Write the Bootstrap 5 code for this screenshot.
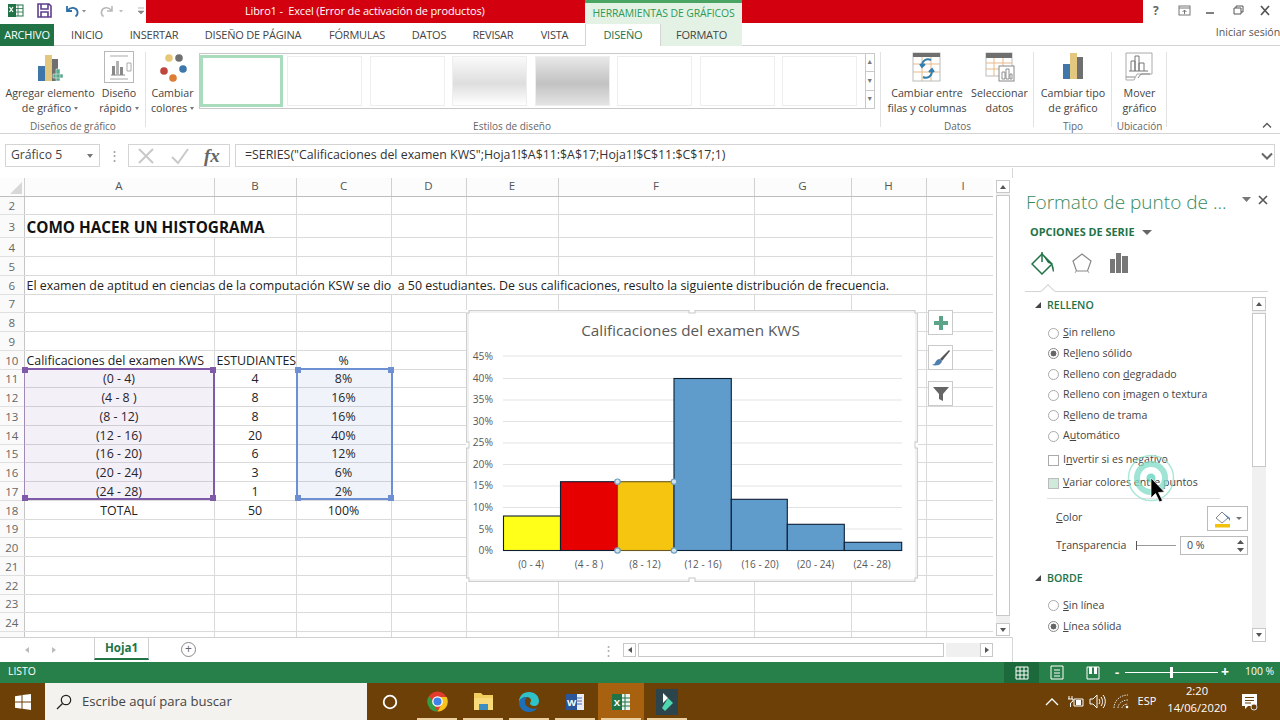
<!DOCTYPE html>
<html lang="es">
<head>
<meta charset="UTF-8">
<title>Libro1 - Excel</title>
<link href="https://cdn.jsdelivr.net/npm/bootstrap@5.3.0/dist/css/bootstrap.min.css" rel="stylesheet">
<style>
html,body{margin:0;height:720px;overflow:hidden;background:#fff}
body{font-family:"Open Sans","Liberation Sans",sans-serif;font-size:11.5px;color:#444}
.xl-app{width:1280px;height:720px;overflow:hidden}
.xl-title{height:24px;flex:none}
.xl-qat{width:146px}
.xl-red{background:#d3000f;color:#fff;height:23px}
.xl-red1{width:439px;font-size:11px;letter-spacing:-.15px}
.xl-red2{width:401px}
.xl-tool{width:157px;background:#e3f2e5;border-top:3px solid #4aa564;color:#2f9a55;font-size:10.4px;letter-spacing:-.1px}
.xl-win{width:137px;color:#555}
.xl-tabs{height:22px;flex:none;border-bottom:1px solid #d4d4d4;font-size:11px;letter-spacing:-.2px;color:#444}
.xl-tab{height:22px;display:flex;align-items:center;justify-content:center;padding-top:1px}
.xl-tab-file{background:#217346;color:#fff;width:54px}
.xl-tab-on{background:#fff;color:#217346;border:1px solid #d4d4d4;border-top:0;border-bottom:0;height:22px;width:76px}
.xl-tab-ctx{background:#e3f2e5;width:81px}
.xl-login{margin-left:auto;padding:0 0 4px;width:64px;font-size:10.6px;letter-spacing:0;white-space:nowrap;color:#555}
.xl-ribbon{height:88px;flex:none;border-bottom:1px solid #d4d4d4;background:#fff}
.xl-grp{height:87px;flex:none;position:relative}
.xl-grp::after{content:"";position:absolute;right:0;top:6px;bottom:6px;border-right:1px solid #e2e2e2}
.xl-grp-name{height:15px;line-height:17px;font-size:10px;color:#666;text-align:center;flex:none}
.xl-tools{flex:1;min-height:0}
.xl-btn{display:flex;flex-direction:column;align-items:center;text-align:center;line-height:15px;font-size:10.7px;color:#444;flex:none;white-space:nowrap}
.xl-btn svg{display:block;height:34px;margin:5px 0 1px}
.xl-caret{display:inline-block;border:2.5px solid transparent;border-top:3px solid #777;border-bottom:0;vertical-align:2px;margin-left:3px}
.xl-gallery{margin-top:7px;height:56px;width:676px;border:1px solid #c9c9c9;gap:7.5px;padding:2px 0;flex:none}
.xl-swatch{width:75px;height:50px;border:1px solid #eee;background:#fff;flex:none}
.xl-swatch-on{width:83px;height:52px;margin-top:-1px;border:3px solid #a9dcbd;margin-right:-3.5px}
.xl-swatch-g1{background:linear-gradient(#fafafa,#dedede 55%,#fff)}
.xl-swatch-g2{background:linear-gradient(#e8e8e8,#c2c2c2 55%,#e4e4e4)}
.xl-gal-bar{width:15px;margin-left:auto;border-left:1px solid #c9c9c9;font-size:7px;color:#777;margin-top:-2px;margin-bottom:-2px}
.xl-gal-bar span{flex:1;display:flex;align-items:center;justify-content:center;border-bottom:1px solid #c9c9c9}
.xl-gal-bar span:last-child{border-bottom:0}
.xl-fbar{height:34px;flex:none;padding:10px 5px 0 5px}
.xl-name{width:95px;height:23px;border:1px solid #d4d4d4;padding:0 5px;font-size:12.2px;color:#444}
.xl-dots{width:28px;color:#999;font-size:13px;text-align:center}
.xl-fbtns{width:102px;height:23px;border:1px solid #d4d4d4;gap:14px;padding:0 7px}
.xl-formula{width:1040px;margin-left:5px;height:23px;border:1px solid #d4d4d4;padding:0 9px;font-size:12.35px;color:#333;white-space:nowrap}
.xl-main{height:494px;flex:none}
.xl-left{width:1013px;flex:none;padding-top:10px;border-right:1px solid #d8d8d8}
.xl-gridwrap{height:459px;flex:none}
.xl-grid{width:993px;height:459px;overflow:hidden;position:relative;flex:none}
.xl-sheet{table-layout:fixed;width:1000px;border-collapse:collapse;margin:0;font-size:12.4px;color:#222}
.xl-sheet>:not(caption)>*>*{padding:2px 2px 0;border:1px solid #dadada;height:18.75px;line-height:14px;white-space:nowrap;box-shadow:none;vertical-align:middle;font-weight:400;background:#fff;color:#222}
.xl-sheet>thead>tr>th{height:18px;padding:0 0 1px;text-align:center;color:#555;background:#fcfcfc;border-color:#d0d0d0;border-top:0;border-bottom:1.5px solid #bdbdbd;font-size:11.5px}
.xl-sheet>tbody>tr>th{text-align:center;color:#666;background:#fafafa;border-color:#e0e0e0;border-left:0;border-right:1.5px solid #c6c6c6;font-size:11.5px;padding:2px 0 0}
.xl-sheet>thead>tr>th:first-child{border-left:0}
.xl-sheet>tbody>tr>.xl-big{font-size:15.3px;font-weight:700;height:23px;color:#111;padding:1px 0 0 2px}
.xl-sheet .xl-ctr{text-align:center}
.xl-range{position:absolute;pointer-events:none}
.xl-range i{position:absolute;width:6px;height:6px}
.xl-rg-a{left:24px;top:190px;width:191px;height:132px;background:rgba(112,70,170,.08);border:2px solid #7f5aa8;border-left:1px solid rgba(127,90,168,.5)}
.xl-rg-a i{background:#7f5aa8}
.xl-rg-c{left:295.5px;top:190px;width:97px;height:132px;background:rgba(60,100,190,.08);border:2px solid #6c90d2}
.xl-rg-c i{background:#6c90d2}
.xl-tl{left:-3px;top:-3px}.xl-tr{right:-3px;top:-3px}.xl-bl{left:-3px;bottom:-3px}.xl-br{right:-3px;bottom:-3px}
.xl-chart{position:absolute;left:466px;top:132px;width:452px;height:272px}
.xl-chart svg{display:block}
.xl-chart text{font-family:"Open Sans","Liberation Sans",sans-serif}
.xl-fab{position:absolute;left:928px;width:25px;height:25px;background:#fff;border:1px solid #cacaca;display:flex;align-items:center;justify-content:center}
.xl-vs{width:20px;flex:none;padding:2px 3px 0;background:#fff}
.xl-sb-btn{height:13px;border:1px solid #c8c8c8;background:#fff;display:flex;align-items:center;justify-content:center;flex:none}
.xl-sb-tri{border:3px solid transparent}
.xl-up{border-bottom:4px solid #555;border-top:0}
.xl-dn{border-top:4px solid #555;border-bottom:0}
.xl-lf{border-right:4px solid #555;border-left:0}
.xl-rt{border-left:4px solid #555;border-right:0}
.xl-sb-track{background:#f0f0f0;flex:1}
.xl-sb-thumb{background:#fff;border:1px solid #c8c8c8}
.xl-sheettabs{height:25px;flex:none;border-top:1px solid #d0d0d0;color:#aaa;position:relative}
.xl-sheet-tab{margin-left:94px;width:55px;height:22px;border:1px solid #d0d0d0;border-top:0;border-bottom:2px solid #217346;color:#217346;font-weight:700;font-size:11.6px;background:#fff}
.xl-nav-tri{position:absolute;top:9px}
.xl-addsheet{position:absolute;left:181px;top:4px;width:15px;height:15px;border:1px solid #888;border-radius:50%;color:#666;font-size:12px;line-height:12px;text-align:center}
.xl-hs{position:absolute;left:623px;top:5px;width:370px;height:14px}
.xl-hs .xl-sb-btn{width:13px;height:14px}
.xl-hs .xl-sb-thumb{width:306px;margin:0 2px}
.xl-pane{width:267px;flex:none;position:relative;background:#fff}
.xl-pane-title{padding:22px 0 0 13px;font-size:19px;line-height:24px;color:#378a5c;font-weight:300;white-space:nowrap}
.xl-pane-sub{padding:10px 0 0 17px;font-size:10.9px;line-height:16px;font-weight:700;color:#217346;height:26px}
.xl-pane-icons{padding:0 0 0 18px;gap:16px;height:46px}
.xl-pane-rule{margin:5px 12px 0 12px;height:0;border-top:1px solid #d4d4d4;position:relative;width:243px}
.xl-notch{position:absolute;left:18px;top:-6px;width:10px;height:10px;transform:rotate(45deg);background:#fff;border-left:1px solid #d4d4d4;border-top:1px solid #d4d4d4}
.xl-pane-body{height:345px;margin-top:5px}
.xl-pane-list{width:239px;overflow:hidden;flex:none;font-size:10.6px;color:#444}
.xl-pane-sb{width:14px;flex:none}
.xl-pane-sb .xl-sb-btn{height:14px}
.xl-sec{height:17px;line-height:17px;padding-left:22px;font-weight:600;color:#217346;font-size:10.6px}
.xl-sec-tri{display:inline-block;width:0;height:0;border-left:6px solid transparent;border-bottom:6px solid #444;margin-right:6px;vertical-align:1px}
.xl-opt{height:20.6px;display:flex;align-items:center;padding-left:35px;gap:4px;white-space:nowrap}
.xl-opt .form-check-input{width:11px;height:11px;margin:0;border:1px solid #aaa;flex:none;background-color:#fff;box-shadow:none}
.xl-opt .form-check-input:checked{background-color:#fff;border-color:#888;background-image:radial-gradient(circle,#666 0,#666 2.7px,transparent 3.2px)}
.xl-opt .form-check-input[type=checkbox]{border-radius:0}
.xl-opt .form-check-input.xl-tint{background:#cfe9da;border-color:#bbb}
.xl-sep{margin:3px 0 0 34px;border-top:1px solid #e0e0e0;width:173px}
.xl-fmt{padding-left:43px;white-space:nowrap}
.xl-fillbtn{margin-left:auto;width:41px;height:25px;border:1px solid #bbb;margin-right:4px;gap:4px}
.xl-spin{width:68px;height:19px;border:1px solid #bbb;margin-left:auto;margin-right:4px;padding:0 3px 0 6px;font-size:10.6px;color:#444}
.xl-slider{width:40px;height:9px;border-left:1px solid #555;margin-left:10px;position:relative}
.xl-slider::after{content:"";position:absolute;left:0;right:0;top:4px;border-top:1px solid #999}
.xl-click{position:absolute;left:1125px;top:452px;pointer-events:none}
.xl-status{height:21px;flex:none;background:#27804a;color:#fff;font-size:10.4px;padding:0 0 2px 8px;position:relative}
.xl-sv{position:absolute;top:0;height:21px;display:flex;align-items:center;justify-content:center}
.xl-sv-on{background:#1c6a3c;left:1004px;width:35px}
.xl-zoomline{position:absolute;left:1125px;top:10px;width:93px;border-top:1px solid #fff}
.xl-zoomthumb{position:absolute;left:1170px;top:5px;width:3px;height:11px;background:#fff}
.xl-task{height:37px;flex:none;background:#6d4007;color:#fff;position:relative}
.xl-search{position:absolute;left:45px;top:0;width:322px;height:37px;background:#f3f2ee;color:#444;font-size:13.1px;gap:10px;padding-left:11px}
.xl-ti{position:absolute;top:0;height:37px;width:46px;display:flex;align-items:center;justify-content:center}
.xl-ti-open::after{content:"";position:absolute;left:3px;right:3px;bottom:0;height:2px;background:#ecd0a0}
.xl-ti-act{background:#a8620f}
.xl-tray{position:absolute;top:0;height:37px;display:flex;align-items:center;justify-content:center;font-size:11px}
.xl-clock{left:1172px;width:50px;flex-direction:column;line-height:17px;font-size:11.2px;text-align:center;padding-bottom:5px}
</style>
</head>
<body>
<div class="xl-app d-flex flex-column">

  <!-- barra de titulo -->
  <div class="xl-title d-flex">
    <div class="xl-qat position-relative">
      <svg width="146" height="24" viewBox="0 0 146 24">
        <rect x="8" y="4" width="8" height="13" fill="#217346"/><rect x="15" y="5" width="8" height="11" fill="none" stroke="#217346"/><path d="M18 5v11M15 8.500h8M15 12h8" stroke="#217346" stroke-width=".8"/>
        <path d="M9.500 7l3.500 5M13 7l-3.500 5" stroke="#fff" stroke-width="1.300"/>
        <path d="M38 4h11l2 2v11H38zM41 4v5h7V4M41 17v-5h7v5" fill="none" stroke="#5d3f8e" stroke-width="1.600"/>
        <path d="M67 6v5h5M67.500 10.500c3-4 9-3.500 10 1 .4 2-.5 4-2 5" fill="none" stroke="#2f6fa8" stroke-width="1.800"/>
        <path d="M82 10h4l-2 2.500z" fill="#888"/>
        <path d="M112 6v5h-5M111.500 10.500c-3-4-9-3.500-10 1-.4 2 .5 4 2 5" fill="none" stroke="#b9b9b9" stroke-width="1.600"/>
        <path d="M119 10h4l-2 2.500z" fill="#bbb"/>
        <path d="M138 8h6M138 11h6l-3 3z" fill="#888" stroke="#888" stroke-width=".6"/>
      </svg>
    </div>
    <div class="xl-red xl-red1 d-flex align-items-center"><span style="margin-left:99px">Libro1 -&nbsp; Excel (Error de activación de productos)</span></div>
    <div class="xl-tool d-flex align-items-center justify-content-center">HERRAMIENTAS DE GRÁFICOS</div>
    <div class="xl-red xl-red2"></div>
    <div class="xl-win">
      <svg width="137" height="24" viewBox="0 0 137 24">
        <text x="10" y="15" font-size="12" font-weight="700" fill="#666" font-family="Open Sans, sans-serif">?</text>
        <rect x="36" y="6" width="11" height="9" fill="none" stroke="#777"/><path d="M36 8h11M41.500 14v-4M39.500 12l2-2 2 2" stroke="#777" fill="none"/>
        <path d="M63 13h8" stroke="#555" stroke-width="1.500"/>
        <path d="M91 8h7v6h-7zM93 8V6h7v6h-2" fill="none" stroke="#555"/>
        <path d="M118 6l8 9M126 6l-8 9" stroke="#555" stroke-width="1.700"/>
      </svg>
    </div>
  </div>

  <!-- pestañas -->
  <div class="xl-tabs d-flex">
    <div class="xl-tab xl-tab-file">ARCHIVO</div>
    <div class="xl-tab" style="width:66px">INICIO</div>
    <div class="xl-tab" style="width:68px">INSERTAR</div>
    <div class="xl-tab" style="width:130px">DISEÑO DE PÁGINA</div>
    <div class="xl-tab" style="width:78px">FÓRMULAS</div>
    <div class="xl-tab" style="width:66px">DATOS</div>
    <div class="xl-tab" style="width:62px">REVISAR</div>
    <div class="xl-tab" style="width:61px">VISTA</div>
    <div class="xl-tab xl-tab-on">DISEÑO</div>
    <div class="xl-tab xl-tab-ctx">FORMATO</div>
    <div class="xl-tab xl-login">Iniciar sesión</div>
  </div>

  <!-- cinta -->
  <div class="xl-ribbon d-flex position-relative">
    <div class="xl-grp d-flex flex-column" style="width:146px">
      <div class="xl-tools d-flex">
        <div class="xl-btn" style="width:100px;">
          <svg width="30" height="34" viewBox="0 0 30 34"><rect x="3" y="15" width="7" height="15" fill="#3f77ab"/><rect x="10" y="4" width="7" height="26" fill="#e4c77f"/><rect x="17" y="8" width="6" height="22" fill="#6f6f6f"/><path d="M18 23h10v4H18zM21 18h4v12h-4z" fill="#5aa98a" stroke="#fff" stroke-width=".5"/></svg>
          <span>Agregar elemento<br>de gráfico<i class="xl-caret"></i></span>
        </div>
        <div class="xl-btn" style="width:38px">
          <svg width="32" height="34" viewBox="0 0 32 34"><rect x="1.500" y=".5" width="29" height="31" fill="#fff" stroke="#b8b8b8"/><path d="M7 5h18M7 28h18" stroke="#aaa"/><path d="M8 24h14" stroke="#888"/><rect x="9" y="15" width="3" height="9" fill="#888"/><rect x="13" y="10" width="3" height="14" fill="#b3b3b3"/><rect x="17" y="16" width="3" height="8" fill="#888"/><path d="M24 12h4v8h-4z" fill="none" stroke="#aaa"/></svg>
          <span>Diseño<br>rápido<i class="xl-caret"></i></span>
        </div>
      </div>
      <div class="xl-grp-name" style="width:146px">Diseños de gráfico</div>
    </div>

    <div class="xl-grp d-flex flex-column" style="width:735px">
      <div class="xl-tools d-flex">
        <div class="xl-btn" style="width:53px">
          <svg width="30" height="34" viewBox="0 0 30 34"><circle cx="11" cy="7" r="3.800" fill="#e8c878"/><circle cx="21" cy="7" r="3.800" fill="#6f6f6f"/><circle cx="6" cy="20" r="3.800" fill="#c0453a"/><circle cx="25" cy="18" r="3.800" fill="#3f77ab"/><circle cx="15" cy="27" r="3.800" fill="#dd7d33"/></svg>
          <span>Cambiar<br>colores<i class="xl-caret"></i></span>
        </div>
        <div class="xl-gallery d-flex">
          <div class="xl-swatch xl-swatch-on"></div>
          <div class="xl-swatch"></div>
          <div class="xl-swatch"></div>
          <div class="xl-swatch xl-swatch-g1"></div>
          <div class="xl-swatch xl-swatch-g2"></div>
          <div class="xl-swatch"></div>
          <div class="xl-swatch"></div>
          <div class="xl-swatch"></div>
          <div class="xl-gal-bar d-flex flex-column"><span>▲</span><span>▼</span><span>▼</span></div>
        </div>
      </div>
      <div class="xl-grp-name" style="padding-right:3px;">Estilos de diseño</div>
    </div>

    <div class="xl-grp d-flex flex-column" style="width:153px">
      <div class="xl-tools d-flex">
        <div class="xl-btn" style="width:92px">
          <svg width="30" height="34" viewBox="0 0 30 34"><rect x="1" y="2" width="27" height="28" fill="#fff" stroke="#bbb"/><rect x="1" y="2" width="27" height="4" fill="#6f6f6f"/><path d="M1 13h27M1 21h27M10 6v24M19 6v24" stroke="#e6b98a"/><path d="M19 9c-4-2-9 0-9 6M8 13l2 3 3-3M11 26c4 2 9 0 9-7M17 21l3-3 2 3" fill="none" stroke="#2f7fb0" stroke-width="2"/></svg>
          <span>Cambiar entre<br>filas y columnas</span>
        </div>
        <div class="xl-btn" style="width:53px">
          <svg width="30" height="34" viewBox="0 0 30 34"><rect x="1" y="2" width="26" height="23" fill="#fff" stroke="#bbb"/><rect x="1" y="2" width="26" height="5" fill="#6f6f6f"/><path d="M1 12h26M1 18h26M9 7v18M18 7v18" stroke="#e6b98a"/><rect x="14" y="15" width="15" height="15" fill="#fff" stroke="#888"/><path d="M17 21h3v7h-3zM21 18h3v10h-3zM25 23h2v5h-2z" fill="#fff" stroke="#777" stroke-width=".8"/></svg>
          <span>Seleccionar<br>datos</span>
        </div>
      </div>
      <div class="xl-grp-name">Datos</div>
    </div>

    <div class="xl-grp d-flex flex-column" style="width:78px">
      <div class="xl-tools d-flex justify-content-center">
        <div class="xl-btn">
          <svg width="24" height="34" viewBox="0 0 24 34"><rect x="2" y="13" width="7" height="15" fill="#3f77ab"/><rect x="9" y="2" width="7" height="26" fill="#e4c77f"/><rect x="16" y="6" width="6" height="22" fill="#6f6f6f"/></svg>
          <span>Cambiar tipo<br>de gráfico</span>
        </div>
      </div>
      <div class="xl-grp-name">Tipo</div>
    </div>

    <div class="xl-grp d-flex flex-column" style="width:55px">
      <div class="xl-tools d-flex justify-content-center">
        <div class="xl-btn">
          <svg width="30" height="34" viewBox="0 0 30 34"><path d="M2 2h26v21H13l-3 6H2z" fill="#fff" stroke="#aaa"/><path d="M14 27l3-4h9M2 26h9" fill="none" stroke="#888"/><path d="M7 20V10h4v10M11 20V5h4v15M15 20V12h5v8M5 20h19" fill="none" stroke="#777"/></svg>
          <span>Mover<br>gráfico</span>
        </div>
      </div>
      <div class="xl-grp-name" style="margin:0 -4px">Ubicación</div>
    </div>
    <svg class="position-absolute" style="left:1262px;top:76px" width="10" height="7" viewBox="0 0 10 7"><path d="M1 5.500l4-4 4 4" fill="none" stroke="#555" stroke-width="1.300"/></svg>
  </div>

  <!-- barra de formulas -->
  <div class="xl-fbar d-flex">
    <div class="xl-name d-flex align-items-center justify-content-between"><span>Gráfico 5</span><i class="xl-caret" style="border-width:4px 3.500px 0;margin-right:1px"></i></div>
    <div class="xl-dots d-flex align-items-center justify-content-center">⋮</div>
    <div class="xl-fbtns d-flex align-items-center">
      <svg width="20" height="18" viewBox="0 0 20 18"><path d="M3 2l14 14M17 2L3 16" stroke="#c9c9c9" stroke-width="2"/></svg>
      <svg width="20" height="18" viewBox="0 0 20 18"><path d="M2 10l6 6L18 2" fill="none" stroke="#c9c9c9" stroke-width="2"/></svg>
      <span style="font-family:'Liberation Serif',serif;font-style:italic;font-size:19px;line-height:18px;color:#666;font-weight:700">fx</span>
    </div>
    <div class="xl-formula d-flex align-items-center justify-content-between"><span>=SERIES("Calificaciones del examen KWS";Hoja1!$A$11:$A$17;Hoja1!$C$11:$C$17;1)</span>
      <svg width="12" height="8" viewBox="0 0 12 8" style="margin-right:-8px"><path d="M1 1.500l5 5 5-5" fill="none" stroke="#666" stroke-width="2"/></svg></div>
  </div>

  <div class="xl-main d-flex">
    <div class="xl-left d-flex flex-column">
      <div class="xl-gridwrap d-flex">
        <div class="xl-grid">
          <table class="table xl-sheet">
            <colgroup><col style="width:24px"><col style="width:190px"><col style="width:82px"><col style="width:95px"><col style="width:75px"><col style="width:92px"><col style="width:196px"><col style="width:97px"><col style="width:75px"><col style="width:74px"></colgroup>
            <thead><tr><th></th><th>A</th><th>B</th><th>C</th><th>D</th><th>E</th><th>F</th><th>G</th><th>H</th><th>I</th></tr></thead>
            <tbody>
              <tr><th>2</th><td></td><td></td><td></td><td></td><td></td><td></td><td></td><td></td><td></td></tr>
              <tr><th>3</th><td class="xl-big" colspan="2">COMO HACER UN HISTOGRAMA</td><td></td><td></td><td></td><td></td><td></td><td></td><td></td></tr>
              <tr><th>4</th><td></td><td></td><td></td><td></td><td></td><td></td><td></td><td></td><td></td></tr>
              <tr><th>5</th><td></td><td></td><td></td><td></td><td></td><td></td><td></td><td></td><td></td></tr>
              <tr><th>6</th><td colspan="8">El examen de aptitud en ciencias de la computación KSW se dio&nbsp; a 50 estudiantes. De sus calificaciones, resulto la siguiente distribución de frecuencia.</td><td></td></tr>
              <tr><th>7</th><td></td><td></td><td></td><td></td><td></td><td></td><td></td><td></td><td></td></tr>
              <tr><th>8</th><td></td><td></td><td></td><td></td><td></td><td></td><td></td><td></td><td></td></tr>
              <tr><th>9</th><td></td><td></td><td></td><td></td><td></td><td></td><td></td><td></td><td></td></tr>
              <tr><th>10</th><td>Calificaciones del examen KWS</td><td class="xl-ctr">ESTUDIANTES</td><td class="xl-ctr">%</td><td></td><td></td><td></td><td></td><td></td><td></td></tr>
              <tr><th>11</th><td class="xl-ctr">(0 - 4)</td><td class="xl-ctr">4</td><td class="xl-ctr">8%</td><td></td><td></td><td></td><td></td><td></td><td></td></tr>
              <tr><th>12</th><td class="xl-ctr">(4 - 8 )</td><td class="xl-ctr">8</td><td class="xl-ctr">16%</td><td></td><td></td><td></td><td></td><td></td><td></td></tr>
              <tr><th>13</th><td class="xl-ctr">(8 - 12)</td><td class="xl-ctr">8</td><td class="xl-ctr">16%</td><td></td><td></td><td></td><td></td><td></td><td></td></tr>
              <tr><th>14</th><td class="xl-ctr">(12 - 16)</td><td class="xl-ctr">20</td><td class="xl-ctr">40%</td><td></td><td></td><td></td><td></td><td></td><td></td></tr>
              <tr><th>15</th><td class="xl-ctr">(16 - 20)</td><td class="xl-ctr">6</td><td class="xl-ctr">12%</td><td></td><td></td><td></td><td></td><td></td><td></td></tr>
              <tr><th>16</th><td class="xl-ctr">(20 - 24)</td><td class="xl-ctr">3</td><td class="xl-ctr">6%</td><td></td><td></td><td></td><td></td><td></td><td></td></tr>
              <tr><th>17</th><td class="xl-ctr">(24 - 28)</td><td class="xl-ctr">1</td><td class="xl-ctr">2%</td><td></td><td></td><td></td><td></td><td></td><td></td></tr>
              <tr><th>18</th><td class="xl-ctr">TOTAL</td><td class="xl-ctr">50</td><td class="xl-ctr">100%</td><td></td><td></td><td></td><td></td><td></td><td></td></tr>
              <tr><th>19</th><td></td><td></td><td></td><td></td><td></td><td></td><td></td><td></td><td></td></tr>
              <tr><th>20</th><td></td><td></td><td></td><td></td><td></td><td></td><td></td><td></td><td></td></tr>
              <tr><th>21</th><td></td><td></td><td></td><td></td><td></td><td></td><td></td><td></td><td></td></tr>
              <tr><th>22</th><td></td><td></td><td></td><td></td><td></td><td></td><td></td><td></td><td></td></tr>
              <tr><th>23</th><td></td><td></td><td></td><td></td><td></td><td></td><td></td><td></td><td></td></tr>
              <tr><th>24</th><td></td><td></td><td></td><td></td><td></td><td></td><td></td><td></td><td></td></tr>
              <tr><th></th><td></td><td></td><td></td><td></td><td></td><td></td><td></td><td></td><td></td></tr>
            </tbody>
          </table>
          <svg class="position-absolute" style="left:10px;top:4px" width="12" height="12" viewBox="0 0 12 12"><path d="M12 0v12H0z" fill="#d8d8d8"/></svg>

          <!-- rangos de datos del grafico -->
          <div class="xl-range xl-rg-a"><i class="xl-tl"></i><i class="xl-tr"></i><i class="xl-bl"></i><i class="xl-br"></i></div>
          <div class="xl-range xl-rg-c"><i class="xl-tl"></i><i class="xl-tr"></i><i class="xl-bl"></i><i class="xl-br"></i></div>

          <!-- grafico -->
          <div class="xl-chart">
            <svg width="452" height="272" viewBox="466 310 452 272">
              <rect x="466.500" y="310.500" width="451" height="271" fill="#fff" stroke="#cfcfcf"/>
              <rect x="468" y="312" width="448" height="268" fill="#fff" stroke="#e4e4e4"/>
              <g fill="#fff" stroke="#c8c8c8"><rect x="463" y="307" width="6" height="6"/><rect x="689" y="307" width="6" height="6"/><rect x="915" y="307" width="6" height="6"/><rect x="463" y="442" width="6" height="6"/><rect x="915" y="442" width="6" height="6"/><rect x="463" y="578" width="6" height="6"/><rect x="689" y="578" width="6" height="6"/><rect x="915" y="578" width="6" height="6"/></g>
              <text x="690.500" y="336" text-anchor="middle" font-size="15.250" fill="#595959">Calificaciones del examen KWS</text>
              <g stroke="#e3e3e3" stroke-width="1"><path d="M503 356h399M503 378.500h399M503 400h399M503 421.500h399M503 443h399M503 464.500h399M503 486h399M503 507.500h399M503 529h399"/></g>
              <g font-size="10.300" fill="#595959" text-anchor="end"><text x="493" y="359.500">45%</text><text x="493" y="381.500">40%</text><text x="493" y="403">35%</text><text x="493" y="424.500">30%</text><text x="493" y="446">25%</text><text x="493" y="467.500">20%</text><text x="493" y="489">15%</text><text x="493" y="510.500">10%</text><text x="493" y="532.500">5%</text><text x="493" y="554">0%</text></g>
              <g stroke="#0c1f33" stroke-width="1.100">
                <rect x="503.500" y="516" width="57" height="34.500" fill="#ffff19"/>
                <rect x="560.500" y="481.700" width="57" height="68.800" fill="#e60000"/>
                <rect x="617.500" y="481.700" width="56.500" height="68.800" fill="#f6c510" stroke="#6b5a1c"/>
                <rect x="674" y="378.500" width="57.300" height="172" fill="#5f9ccb"/>
                <rect x="731.300" y="499.300" width="56" height="51.200" fill="#5f9ccb"/>
                <rect x="787.300" y="524.300" width="57" height="26.200" fill="#5f9ccb"/>
                <rect x="844.300" y="542.300" width="57.400" height="8.200" fill="#5f9ccb"/>
              </g>
              <g fill="#d2e3ee" stroke="#6d9fbd" stroke-width="1.200"><circle cx="617.500" cy="481.700" r="2.700"/><circle cx="674" cy="481.700" r="2.700"/><circle cx="617.500" cy="550.500" r="2.700"/><circle cx="674" cy="550.500" r="2.700"/></g>
              <g font-size="10" fill="#595959" text-anchor="middle"><text x="531" y="568">(0 - 4)</text><text x="589" y="568">(4 - 8 )</text><text x="645" y="568">(8 - 12)</text><text x="703" y="568">(12 - 16)</text><text x="760" y="568">(16 - 20)</text><text x="815.500" y="568">(20 - 24)</text><text x="872" y="568">(24 - 28)</text></g>
            </svg>
          </div>
          <div class="xl-fab" style="top:132px"><svg width="14" height="14" viewBox="0 0 14 14"><path d="M5 0h4v5h5v4H9v5H5V9H0V5h5z" fill="#5ba487"/></svg></div>
          <div class="xl-fab" style="top:167px"><svg width="20" height="18" viewBox="0 0 20 18"><path d="M18 1L9 10l2 2 8-10z" fill="#555"/><path d="M9 10c-3 0-4 2-5 4-.5 1-2 1.500-3 2 4 1 9 .5 10-4z" fill="#4f7fb0"/></svg></div>
          <div class="xl-fab" style="top:203px"><svg width="18" height="18" viewBox="0 0 18 18"><path d="M1 2h16L11 9v7l-4-2V9z" fill="#666"/></svg></div>
        </div>
        <div class="xl-vs d-flex flex-column">
          <div class="xl-sb-btn"><i class="xl-sb-tri xl-up"></i></div>
          <div class="xl-sb-track d-flex flex-column">
            <div class="xl-sb-thumb" style="height:421px;margin-top:2px"></div>
          </div>
          <div class="xl-sb-btn" style="margin-bottom:1px"><i class="xl-sb-tri xl-dn"></i></div>
        </div>
      </div>
      <div class="xl-sheettabs d-flex">
        <i class="xl-sb-tri xl-lf xl-nav-tri" style="left:25px;border-right-color:#bbb"></i>
        <i class="xl-sb-tri xl-rt xl-nav-tri" style="left:52px;border-left-color:#bbb"></i>
        <div class="xl-sheet-tab d-flex align-items-center justify-content-center">Hoja1</div>
        <div class="xl-addsheet">+</div>
        <span class="position-absolute" style="left:602px;top:3px;color:#aaa;font-size:13px">⋮</span>
        <div class="xl-hs d-flex">
          <div class="xl-sb-btn"><i class="xl-sb-tri xl-lf"></i></div>
          <div class="xl-sb-thumb"></div>
          <div class="xl-sb-track"></div>
          <div class="xl-sb-btn"><i class="xl-sb-tri xl-rt"></i></div>
        </div>
      </div>
    </div>

    <!-- panel de formato -->
    <div class="xl-pane">
      <div class="xl-pane-title">Formato de punto de ...</div>
      <svg class="position-absolute" style="left:229px;top:27px" width="32" height="10" viewBox="0 0 32 10"><path d="M0 2h9L4.500 7z" fill="#777"/><path d="M17 1l8 8M25 1l-8 8" stroke="#555" stroke-width="1.600"/></svg>
      <div class="xl-pane-sub">OPCIONES DE SERIE <i class="xl-caret" style="border-width:5px 5px 0;border-top-color:#666;margin-left:5px;vertical-align:1px"></i></div>
      <div class="xl-pane-icons d-flex align-items-center">
        <svg width="24" height="24" viewBox="0 0 24 24"><path d="M1 13L11 3l10 10-10 10z" fill="#fff" stroke="#217346" stroke-width="1.500"/><path d="M11 3V1M11 3v8" stroke="#217346" stroke-width="1.500"/><path d="M11 3l10 10c2 2 2 7 2 7l-1 1-2-8-3-1z" fill="#217346"/></svg>
        <svg width="22" height="24" viewBox="0 0 22 24"><path d="M11 3l9 7-3.500 10h-11L2 10z" fill="#fff" stroke="#888" stroke-width="1.200"/><path d="M5 20l-1 2M17 20l1 2" stroke="#aaa"/></svg>
        <svg width="20" height="24" viewBox="0 0 20 24"><rect x="1" y="8" width="5" height="14" fill="#777"/><rect x="7" y="2" width="5" height="20" fill="#777"/><rect x="13" y="5" width="6" height="17" fill="#777"/></svg>
      </div>
      <div class="xl-pane-rule"><div class="xl-notch"></div></div>
      <div class="xl-pane-body d-flex">
        <div class="xl-pane-list">
          <div class="xl-sec"><i class="xl-sec-tri"></i>RELLENO</div>
          <div style="height:9px"></div>
          <div class="xl-opt"><input class="form-check-input" type="radio" name="fill"><span><u>S</u>in relleno</span></div>
          <div class="xl-opt"><input class="form-check-input" type="radio" name="fill" checked><span>Re<u>l</u>leno sólido</span></div>
          <div class="xl-opt"><input class="form-check-input" type="radio" name="fill"><span>Relleno con <u>d</u>egradado</span></div>
          <div class="xl-opt"><input class="form-check-input" type="radio" name="fill"><span>Relleno con <u>i</u>magen o textura</span></div>
          <div class="xl-opt"><input class="form-check-input" type="radio" name="fill"><span>R<u>e</u>lleno de trama</span></div>
          <div class="xl-opt"><input class="form-check-input" type="radio" name="fill"><span>A<u>u</u>tomático</span></div>
          <div style="height:2px"></div>
          <div class="xl-opt" style="height:23px"><input class="form-check-input" type="checkbox"><span>I<u>n</u>vertir si es negativo</span></div>
          <div class="xl-opt" style="height:23px"><input class="form-check-input xl-tint" type="checkbox"><span><u>V</u>ariar colores entre puntos</span></div>
          <div class="xl-sep"></div>
          <div class="xl-fmt d-flex align-items-center" style="height:39px"><span><u>C</u>olor</span>
            <div class="xl-fillbtn d-flex align-items-center justify-content-center"><svg width="18" height="20" viewBox="0 0 18 20"><path d="M2 10l6-6 6 6-6 5z" fill="#fff" stroke="#888"/><path d="M8 4l6 6 2 3v-3z" fill="#4f7fb0"/><rect x="1" y="16" width="15" height="3.500" fill="#f2c20c"/></svg><i class="xl-caret" style="border-width:3.500px 3px 0;margin:0"></i></div>
          </div>
          <div class="xl-fmt d-flex align-items-center" style="height:18px;margin-top:-1px"><span>T<u>r</u>ansparencia</span><div class="xl-slider"></div>
            <div class="xl-spin d-flex align-items-center justify-content-between"><span>0 %</span><svg width="7" height="14" viewBox="0 0 7 14"><path d="M0 5l3.500-4L7 5zM0 9l3.500 4L7 9z" fill="#555"/></svg></div>
          </div>
          <div style="height:15px"></div>
          <div class="xl-sec"><i class="xl-sec-tri"></i>BORDE</div>
          <div style="height:9px"></div>
          <div class="xl-opt"><input class="form-check-input" type="radio" name="line"><span><u>S</u>in línea</span></div>
          <div class="xl-opt"><input class="form-check-input" type="radio" name="line" checked><span><u>L</u>ínea sólida</span></div>
          <div class="xl-opt"><input class="form-check-input" type="radio" name="line"><span>Línea con degradado</span></div>
        </div>
        <div class="xl-pane-sb d-flex flex-column">
          <div class="xl-sb-btn"><i class="xl-sb-tri xl-up"></i></div>
          <div class="xl-sb-track d-flex flex-column">
            <div class="xl-sb-thumb" style="height:154px;margin-top:2px"></div>
          </div>
          <div class="xl-sb-btn"><i class="xl-sb-tri xl-dn"></i></div>
        </div>
      </div>
    </div>
  </div>

  <!-- barra de estado -->
  <div class="xl-status d-flex align-items-center">
    <span>LISTO</span>
    <div class="xl-sv xl-sv-on"><svg width="14" height="14" viewBox="0 0 14 14"><path d="M1 1h12v12H1zM5 1v12M9 1v12M1 5h12M1 9h12" fill="none" stroke="#fff"/></svg></div>
    <div class="xl-sv" style="left:1049px;width:16px"><svg width="14" height="15" viewBox="0 0 14 15"><path d="M1 1h12v13H1zM4 5h6M4 8h6M4 11h6" fill="none" stroke="#fff"/></svg></div>
    <div class="xl-sv" style="left:1085px;width:15px"><svg width="14" height="14" viewBox="0 0 14 14"><path d="M1 1h12v12H1z" fill="none" stroke="#fff"/><path d="M3 1h3v7H3zM8 1h3v7H8z" fill="#fff"/></svg></div>
    <span class="position-absolute" style="left:1115px;top:1px;font-size:13px;font-weight:700">-</span>
    <div class="xl-zoomline"></div><div class="xl-zoomthumb"></div>
    <span class="position-absolute" style="left:1221px;top:-1px;font-size:14px;font-weight:700">+</span>
    <span class="position-absolute" style="left:1245px;top:2px;font-size:10.400px">100 %</span>
  </div>

  <!-- barra de tareas -->
  <div class="xl-task">
    <div class="xl-ti" style="left:0"><svg width="16" height="16" viewBox="0 0 16 16"><path d="M0 2.200l6.500-1v6.300H0zM7.500 1L16 0v7.500H7.500zM0 8.500h6.500v6.300l-6.500-1zM7.500 8.500H16V16l-8.500-1.200z" fill="#fff"/></svg></div>
    <div class="xl-search d-flex align-items-center">
      <svg width="16" height="16" viewBox="0 0 16 16"><circle cx="10" cy="6" r="4.700" fill="none" stroke="#222" stroke-width="1.200"/><path d="M6.500 9.500L1 15" stroke="#222" stroke-width="1.300"/></svg>
      <span>Escribe aquí para buscar</span>
    </div>
    <div class="xl-ti" style="left:367px"><svg width="16" height="16" viewBox="0 0 16 16"><circle cx="8" cy="8" r="6.300" fill="none" stroke="#fff" stroke-width="1.800"/></svg></div>
    <div class="xl-ti xl-ti-open" style="left:414px"><svg width="21" height="21" viewBox="0 0 21 21"><circle cx="10.500" cy="10.500" r="10" fill="#e33b2e"/><path d="M10.500 6h9.200a10 10 0 0 1-9 14.500L15 12z" fill="#f6c21c"/><path d="M2.200 4.800L7 13l3.500 7.500A10 10 0 0 1 2.200 4.800z" fill="#2f9e44"/><circle cx="10.500" cy="10.500" r="4.700" fill="#3f83e8" stroke="#fff" stroke-width="1.300"/></svg></div>
    <div class="xl-ti xl-ti-open" style="left:460px"><svg width="21" height="19" viewBox="0 0 21 19"><path d="M1 1h7l2 2h10v15H1z" fill="#f3cd5d"/><rect x="1" y="6" width="19" height="12" fill="#f8da7a"/><rect x="6" y="12" width="9" height="6" fill="#3a8fc0"/></svg></div>
    <div class="xl-ti xl-ti-open" style="left:506px"><svg width="22" height="22" viewBox="0 0 22 22"><path d="M11 1c6 0 10 4 10 9 0 3-2 5-5 5-2 0-4-1-4-2.500 0-1 1-1.500 1-3 0-2-2-3.500-4-3.500C5 6 2 8 1 11 1 5 5 1 11 1z" fill="#2fc2c8"/><path d="M1 11c0 6 4 10 10 10 3 0 6-1 8-4-2 1-5 1-7 0-3-1-5-3-5-6 0-2 1-4 2-5-4 0-7 2-8 5z" fill="#1d6fb8"/></svg></div>
    <div class="xl-ti xl-ti-open" style="left:552px"><svg width="20" height="20" viewBox="0 0 20 20"><rect x="8" y="2" width="11" height="16" fill="#e8ecf5"/><path d="M11 6h6M11 9h6M11 12h6" stroke="#4a6fb0"/><rect x="1" y="2" width="11" height="16" fill="#2b579a"/><text x="6.500" y="14" font-size="9.500" font-weight="700" text-anchor="middle" fill="#fff" font-family="Open Sans, sans-serif">W</text></svg></div>
    <div class="xl-ti xl-ti-act xl-ti-open" style="left:598px"><svg width="20" height="20" viewBox="0 0 20 20"><rect x="9" y="2" width="10" height="16" fill="#eaf3ec"/><path d="M9 6h10M9 10h10M9 14h10M14 2v16" stroke="#217346"/><rect x="1" y="2" width="10" height="16" fill="#217346"/><text x="6" y="14" font-size="9.500" font-weight="700" text-anchor="middle" fill="#fff" font-family="Open Sans, sans-serif">X</text></svg></div>
    <div class="xl-ti xl-ti-open" style="left:644px"><svg width="22" height="26" viewBox="0 0 22 26"><rect width="22" height="26" fill="#2c444c"/><path d="M7 4l5 5-5 5z" fill="#fff"/><path d="M12 9l5 5-8 8-3-3z" fill="#4fd8b0"/></svg></div>

    <div class="xl-tray" style="left:1043px;width:18px"><svg width="14" height="9" viewBox="0 0 14 9"><path d="M1 8l6-6 6 6" fill="none" stroke="#fff" stroke-width="1.300"/></svg></div>
    <div class="xl-tray" style="left:1066px;width:18px"><svg width="17" height="14" viewBox="0 0 17 14"><path d="M7 4h9v7H7z" fill="none" stroke="#fff"/><rect x="9" y="5" width="5" height="5" fill="#fff"/><path d="M2 1v3M5 1v3M1 4h5v2L3.500 8v4" fill="none" stroke="#fff"/></svg></div>
    <div class="xl-tray" style="left:1088px;width:18px"><svg width="17" height="15" viewBox="0 0 17 15"><path d="M1 5h3l4-4v13l-4-4H1z" fill="none" stroke="#fff"/><path d="M10 5c1 1.500 1 3.500 0 5M12 3c2 2.500 2 6.500 0 9M14 1c3 3.500 3 9.500 0 13" fill="none" stroke="#fff"/></svg></div>
    <div class="xl-tray" style="left:1112px;width:18px"><svg width="16" height="15" viewBox="0 0 16 15"><path d="M1 14C1 7 7 1 15 1M5 14c0-4 4-8 10-8M9 14c0-2 3-4 6-4" fill="none" stroke="#ddd" stroke-dasharray="1.500 1"/><circle cx="14" cy="13" r="1.300" fill="#fff"/></svg></div>
    <div class="xl-tray" style="left:1135px;width:24px">ESP</div>
    <div class="xl-tray xl-clock"><span>2:20</span><span>14/06/2020</span></div>
    <div class="xl-tray" style="left:1240px;width:18px"><svg width="17" height="18" viewBox="0 0 17 18"><path d="M1 1h15v12H7l-3 3v-3H1z" fill="#fff"/><path d="M4 4.500h9M4 7.500h9M4 10h6" stroke="#6d4007"/><circle cx="13" cy="14" r="3" fill="#6d4007" stroke="#ddd"/></svg></div>
  </div>

  <!-- clic del raton -->
  <svg class="xl-click" width="52" height="66" viewBox="0 0 52 66">
    <g opacity=".75"><circle cx="26" cy="26" r="22.500" fill="none" stroke="#8fe0cc" stroke-width="1.500"/>
    <circle cx="26" cy="26" r="14" fill="none" stroke="#7fdcc6" stroke-width="6"/>
    <circle cx="26" cy="26" r="4.500" fill="#5fd2ba"/></g>
    <path d="M26 26v20l4.500-4.500 4 8.500 3-1.500-4-8 6-.5z" fill="#000" stroke="#fff" stroke-width=".7"/>
  </svg>
</div>
<script src="https://cdn.jsdelivr.net/npm/bootstrap@5.3.0/dist/js/bootstrap.bundle.min.js"></script>
</body>
</html>
